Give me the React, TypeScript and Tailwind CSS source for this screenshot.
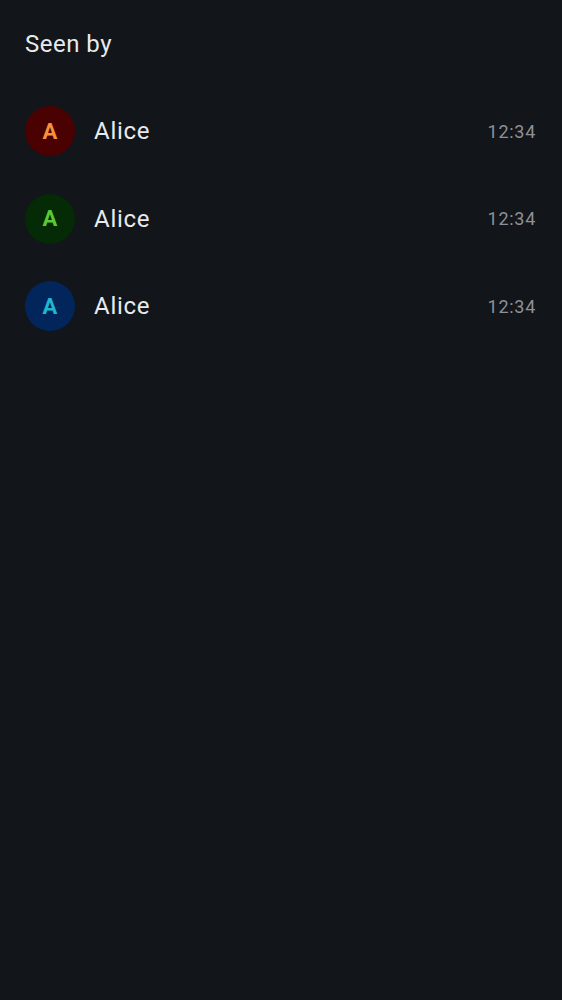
const readers = [
  { name: "Alice", time: "12:34", bg: "bg-[#4a0101]", fg: "text-[#f5913a]" },
  { name: "Alice", time: "12:34", bg: "bg-[#042a06]", fg: "text-[#5cc934]" },
  { name: "Alice", time: "12:34", bg: "bg-[#02265c]", fg: "text-[#22b5cf]" },
];

export default function App() {
  return (
    <div className="min-h-screen bg-[#121519] font-['Roboto',sans-serif]">
      <div className="px-[25px] pt-[28px]">
        <h2 className="text-[24px] leading-[32px] tracking-[0.02em] text-[#e8eaed]">
          Seen by
        </h2>
      </div>

      {/* read receipts */}
      <ul className="mt-[46px] flex flex-col gap-[37.5px] pl-[25px] pr-[26px]">
        {readers.map((r, i) => (
          <li key={i} className="flex items-center">
            <div
              className={`w-[50px] h-[50px] rounded-full flex items-center justify-center shrink-0 ${r.bg}`}
            >
              <span className={`text-[22px] font-bold ${r.fg}`}>A</span>
            </div>
            <span className="ml-[19px] flex-1 text-[24px] tracking-[0.03em] text-[#e8eaed]">
              {r.name}
            </span>
            <span className="text-[18px] tracking-[0.04em] text-[#8d9197]">
              {r.time}
            </span>
          </li>
        ))}
      </ul>
    </div>
  );
}
